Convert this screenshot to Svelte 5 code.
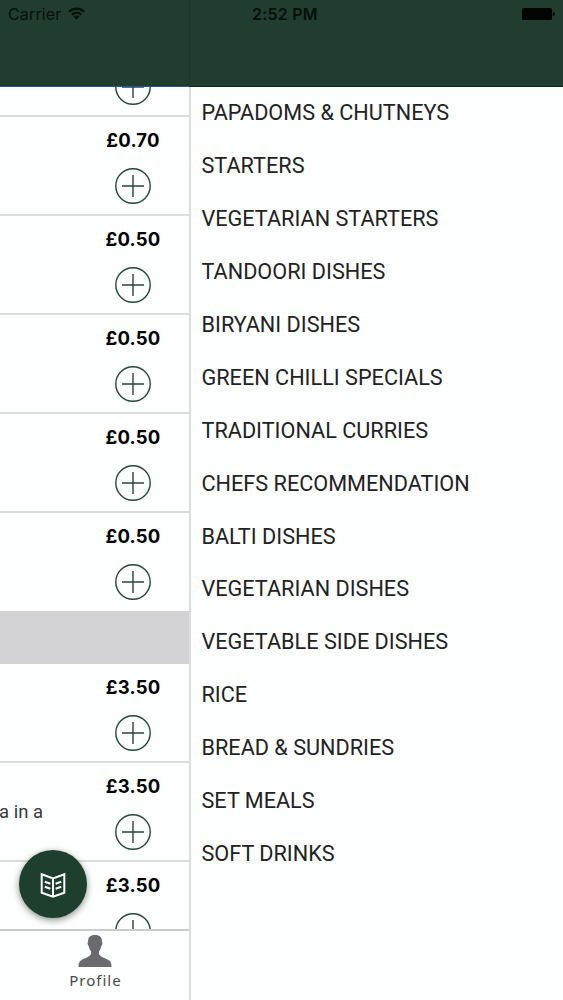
<script>
  const categories = [
    "PAPADOMS & CHUTNEYS",
    "STARTERS",
    "VEGETARIAN STARTERS",
    "TANDOORI DISHES",
    "BIRYANI DISHES",
    "GREEN CHILLI SPECIALS",
    "TRADITIONAL CURRIES",
    "CHEFS RECOMMENDATION",
    "BALTI DISHES",
    "VEGETARIAN DISHES",
    "VEGETABLE SIDE DISHES",
    "RICE",
    "BREAD & SUNDRIES",
    "SET MEALS",
    "SOFT DRINKS",
  ];

  const sections = [
    [
      { price: "" },
      { price: "£0.70" },
      { price: "£0.50" },
      { price: "£0.50" },
      { price: "£0.50" },
      { price: "£0.50" },
    ],
    [
      { price: "£3.50" },
      { price: "£3.50", description: "a in a" },
      { price: "£3.50" },
    ],
  ];
</script>

<style>
  :global(body) {
    background: #fdfefe;
  }

  .screen {
    display: flex;
    flex-direction: column;
    width: 563px;
    height: 1000px;
    overflow: hidden;
    font-family: Roboto, "Liberation Sans", sans-serif;
  }

  .header {
    flex: none;
    display: grid;
    grid-template-columns: 190px 1fr;
    height: 87px;
    background: #203d2f;
  }

  .header-left {
    box-sizing: border-box;
    display: flex;
    align-items: flex-start;
    padding: 4px 0 0 8px;
    border-right: 1px solid #1b3528;
    border-bottom: 1px solid #1f559b;
  }

  .header-right {
    display: flex;
    align-items: flex-start;
    justify-content: space-between;
    padding: 4px 8px 0 62px;
    border-bottom: 1px solid #12251b;
  }

  .carrier,
  .time {
    font-family: Inter, sans-serif;
    font-size: 16px;
    line-height: 20px;
    color: #07100b;
  }

  .carrier {
    letter-spacing: 0.15px;
  }

  .time {
    font-weight: 600;
    letter-spacing: 0.2px;
  }

  .wifi {
    margin: 3px 0 0 6px;
  }

  .battery {
    margin-top: 3px;
  }

  .body {
    flex: 1;
    display: grid;
    grid-template-columns: 189px 1fr;
    grid-template-rows: 100%;
    min-height: 0;
  }

  .main {
    position: relative;
    display: flex;
    flex-direction: column;
    min-height: 0;
  }

  .list {
    flex: 1;
    min-height: 0;
    overflow: hidden;
  }

  .rows:first-child {
    margin-top: -69px;
  }

  .row {
    box-sizing: border-box;
    display: flex;
    justify-content: space-between;
    height: 99px;
    border-bottom: 2px solid #dcdcde;
  }

  .rows:first-child .row:last-child {
    height: 98px;
    border-bottom: none;
  }

  .description {
    margin: 37px 0 0 -1px;
    font-size: 18.5px;
    line-height: 24px;
    white-space: nowrap;
    color: #3a3a3c;
  }

  .buy {
    display: flex;
    flex-direction: column;
    align-items: center;
    width: 112px;
    margin-left: auto;
  }

  .price {
    height: 24px;
    margin: 11px 0 15px;
    font-family: Inter, sans-serif;
    font-weight: 700;
    font-size: 18.5px;
    line-height: 24px;
    letter-spacing: 0.2px;
    color: #000;
  }

  .add {
    display: block;
    padding: 0;
    border: none;
    background: none;
  }

  .add svg,
  .fab svg,
  .tab svg,
  .wifi,
  .battery {
    display: block;
  }

  .section-title {
    height: 53px;
    background: #d3d3d5;
  }

  .fab {
    position: absolute;
    left: 19px;
    top: 763px;
    display: flex;
    align-items: center;
    justify-content: center;
    width: 68px;
    height: 68px;
    padding: 0;
    border: none;
    border-radius: 50%;
    background: #1e3f2d;
    box-shadow: 0 2px 7px rgba(0, 0, 0, 0.45);
  }

  .fab svg {
    margin-top: 2px;
  }

  .tab {
    flex: none;
    box-sizing: border-box;
    display: flex;
    flex-direction: column;
    align-items: center;
    height: 71px;
    padding: 4px 0 0 1px;
    border-top: 2px solid #cbcbcd;
    color: #4a4a4c;
  }

  .tab-label {
    margin-top: 3px;
    padding-left: 1px;
    font-family: "Noto Sans", sans-serif;
    font-size: 15px;
    line-height: 20px;
    letter-spacing: 1px;
  }

  .menu {
    margin: 0;
    padding: 0;
    list-style: none;
    border-left: 2px solid #dcdcde;
  }

  .menu li {
    height: 52.95px;
    padding-left: 10.5px;
    font-size: 21.67px;
    line-height: 51px;
    white-space: nowrap;
    color: #222224;
  }
</style>

<div class="screen">
  <div class="header">
    <div class="header-left">
      <span class="carrier">Carrier</span>
      <svg class="wifi" width="17" height="13" viewBox="0 0 17 13" fill="none" stroke="#07100b" stroke-width="2.2">
        <path d="M1 4.7C5.2 0.5 11.8 0.5 16 4.7" />
        <path d="M3.8 7.6C6.5 5 10.5 5 13.2 7.6" />
        <path d="M5.5 9.7C7.2 8.1 9.8 8.1 11.5 9.7L8.5 12.6Z" fill="#07100b" stroke="none" />
      </svg>
    </div>
    <div class="header-right">
      <span class="time">2:52 PM</span>
      <svg class="battery" width="33" height="14" viewBox="0 0 33 14" fill="#030504">
        <rect x="0" y="1" width="30" height="12" rx="1.5" />
        <path d="M30.8 5c1.6 0 2 1 2 2s-.4 2-2 2z" />
      </svg>
    </div>
  </div>

  <div class="body">
    <div class="main">
      <div class="list">
        {#each sections as items, i}
          {#if i > 0}
            <div class="section-title"></div>
          {/if}
          <div class="rows">
            {#each items as item}
              <div class="row">
                {#if item.description}
                  <span class="description">{item.description}</span>
                {/if}
                <div class="buy">
                  <span class="price">{item.price}</span>
                  <button class="add" aria-label="Add">
                    <svg width="38" height="38" viewBox="0 0 38 38" fill="none" stroke="#24473a" stroke-width="1.4">
                      <circle cx="19" cy="19" r="17.2" />
                      <path d="M19 8v22M8 19h22" />
                    </svg>
                  </button>
                </div>
              </div>
            {/each}
          </div>
        {/each}
      </div>

      <button class="fab" aria-label="Menu">
        <svg width="26" height="26" viewBox="0 0 26 26" fill="none" stroke="#fff" stroke-width="2">
          <path d="M1.7 2.2L13 6.5L24.3 2.2V20.8L13 24.8L1.7 20.8ZM13 6.5V24.8" />
          <path d="M4.8 9.7l5.6 2M4.8 14.7l5.6 2M21.2 9.7l-5.6 2M21.2 14.7l-5.6 2" />
        </svg>
      </button>

      <div class="tab">
        <svg width="34" height="32" viewBox="0 0 34 32" fill="#6b6b6d">
          <path d="M17 0C12.2 0 9.8 2.2 10.2 6.6C9.2 7 9.6 10.8 10.8 11.3C11.2 13.6 12 15.2 13 16.4V19C12.3 22 4.6 23.6 2.2 26C.8 27.4.5 29.5.5 32H33.5C33.5 29.5 33.2 27.4 31.8 26C29.4 23.6 21.7 22 21 19V16.4C22 15.2 22.8 13.6 23.2 11.3C24.4 10.8 24.8 7 23.8 6.6C24.2 2.2 21.8 0 17 0Z" />
        </svg>
        <span class="tab-label">Profile</span>
      </div>
    </div>

    <ul class="menu">
      {#each categories as category}
        <li>{category}</li>
      {/each}
    </ul>
  </div>
</div>
